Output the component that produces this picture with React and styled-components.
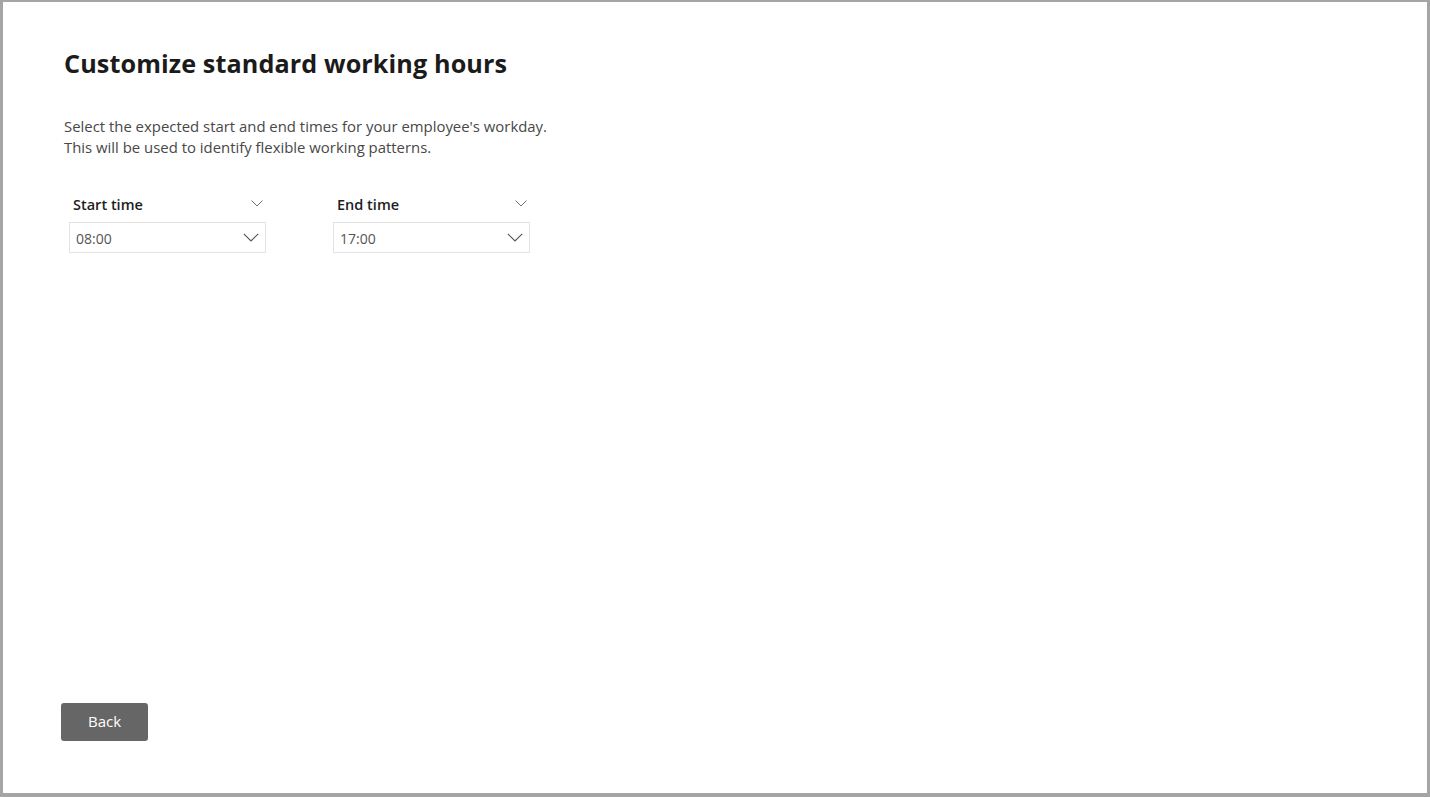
import React from "react";
import styled, { createGlobalStyle } from "styled-components";

const GlobalStyle = createGlobalStyle`
  html, body {
    margin: 0;
    padding: 0;
    background: #fff;
  }
  body {
    font-family: "Open Sans", "Noto Sans", "Liberation Sans", sans-serif;
  }
  * {
    box-sizing: border-box;
  }
`;

const Frame = styled.div`
  width: 1430px;
  height: 797px;
  border: 3px solid #a5a5a5;
  border-top-width: 2px;
  border-bottom-width: 4px;
  background: #fff;
  display: flex;
  flex-direction: column;
  justify-content: space-between;
  padding: 44px 58px 52px 58px;
`;

const Top = styled.div`
  display: flex;
  flex-direction: column;
`;

const Title = styled.h1`
  margin: 0 0 0 3px;
  font-size: 25.2px;
  font-weight: 700;
  color: #1b1b1b;
  line-height: 34px;
  letter-spacing: 0.1px;
`;

const Description = styled.p`
  margin: 36px 0 0 3px;
  font-size: 14.9px;
  line-height: 21px;
  color: #484848;
`;

const Fields = styled.div`
  display: flex;
  gap: 67px;
  margin-top: 34px;
  margin-left: 8px;
`;

const Field = styled.div`
  display: flex;
  flex-direction: column;
  width: 197px;
`;

const LabelRow = styled.div`
  display: flex;
  align-items: center;
  justify-content: space-between;
  padding: 0 3px 0 4px;
  height: 24px;
`;

const Label = styled.span`
  font-size: 14.5px;
  font-weight: 600;
  color: #1e1e1e;
`;

const SelectBox = styled.div`
  margin-top: 6px;
  height: 31px;
  border: 1px solid #e3e3e3;
  display: flex;
  align-items: center;
  justify-content: space-between;
  padding: 1px 6px 0 6px;
  font-size: 14px;
  color: #555;
`;

const Chevron = ({ size = 12, color = "#555" }) => (
  <svg width={size} height={size * 0.6} viewBox="0 0 20 12" fill="none">
    <path d="M1 1l9 9 9-9" stroke={color} strokeWidth="1.4" />
  </svg>
);

const BackButton = styled.button`
  width: 87px;
  height: 38px;
  background: #666;
  color: #fff;
  border: none;
  border-radius: 3px;
  font-family: inherit;
  font-size: 15px;
  cursor: pointer;
  padding: 0 0 2px 0;
`;

const Footer = styled.div`
  display: flex;
`;

const fields = [
  { label: "Start time", value: "08:00" },
  { label: "End time", value: "17:00" },
];

export default function App() {
  return (
    <>
      <GlobalStyle />
      <Frame>
        <Top>
          <Title>Customize standard working hours</Title>
          <Description>
            Select the expected start and end times for your employee's workday.
            <br />
            This will be used to identify flexible working patterns.
          </Description>
          <Fields>
            {fields.map((f) => (
              <Field key={f.label}>
                <LabelRow>
                  <Label>{f.label}</Label>
                  <Chevron size={12} />
                </LabelRow>
                <SelectBox>
                  <span>{f.value}</span>
                  <Chevron size={16} />
                </SelectBox>
              </Field>
            ))}
          </Fields>
        </Top>
        <Footer>
          <BackButton>Back</BackButton>
        </Footer>
      </Frame>
    </>
  );
}
